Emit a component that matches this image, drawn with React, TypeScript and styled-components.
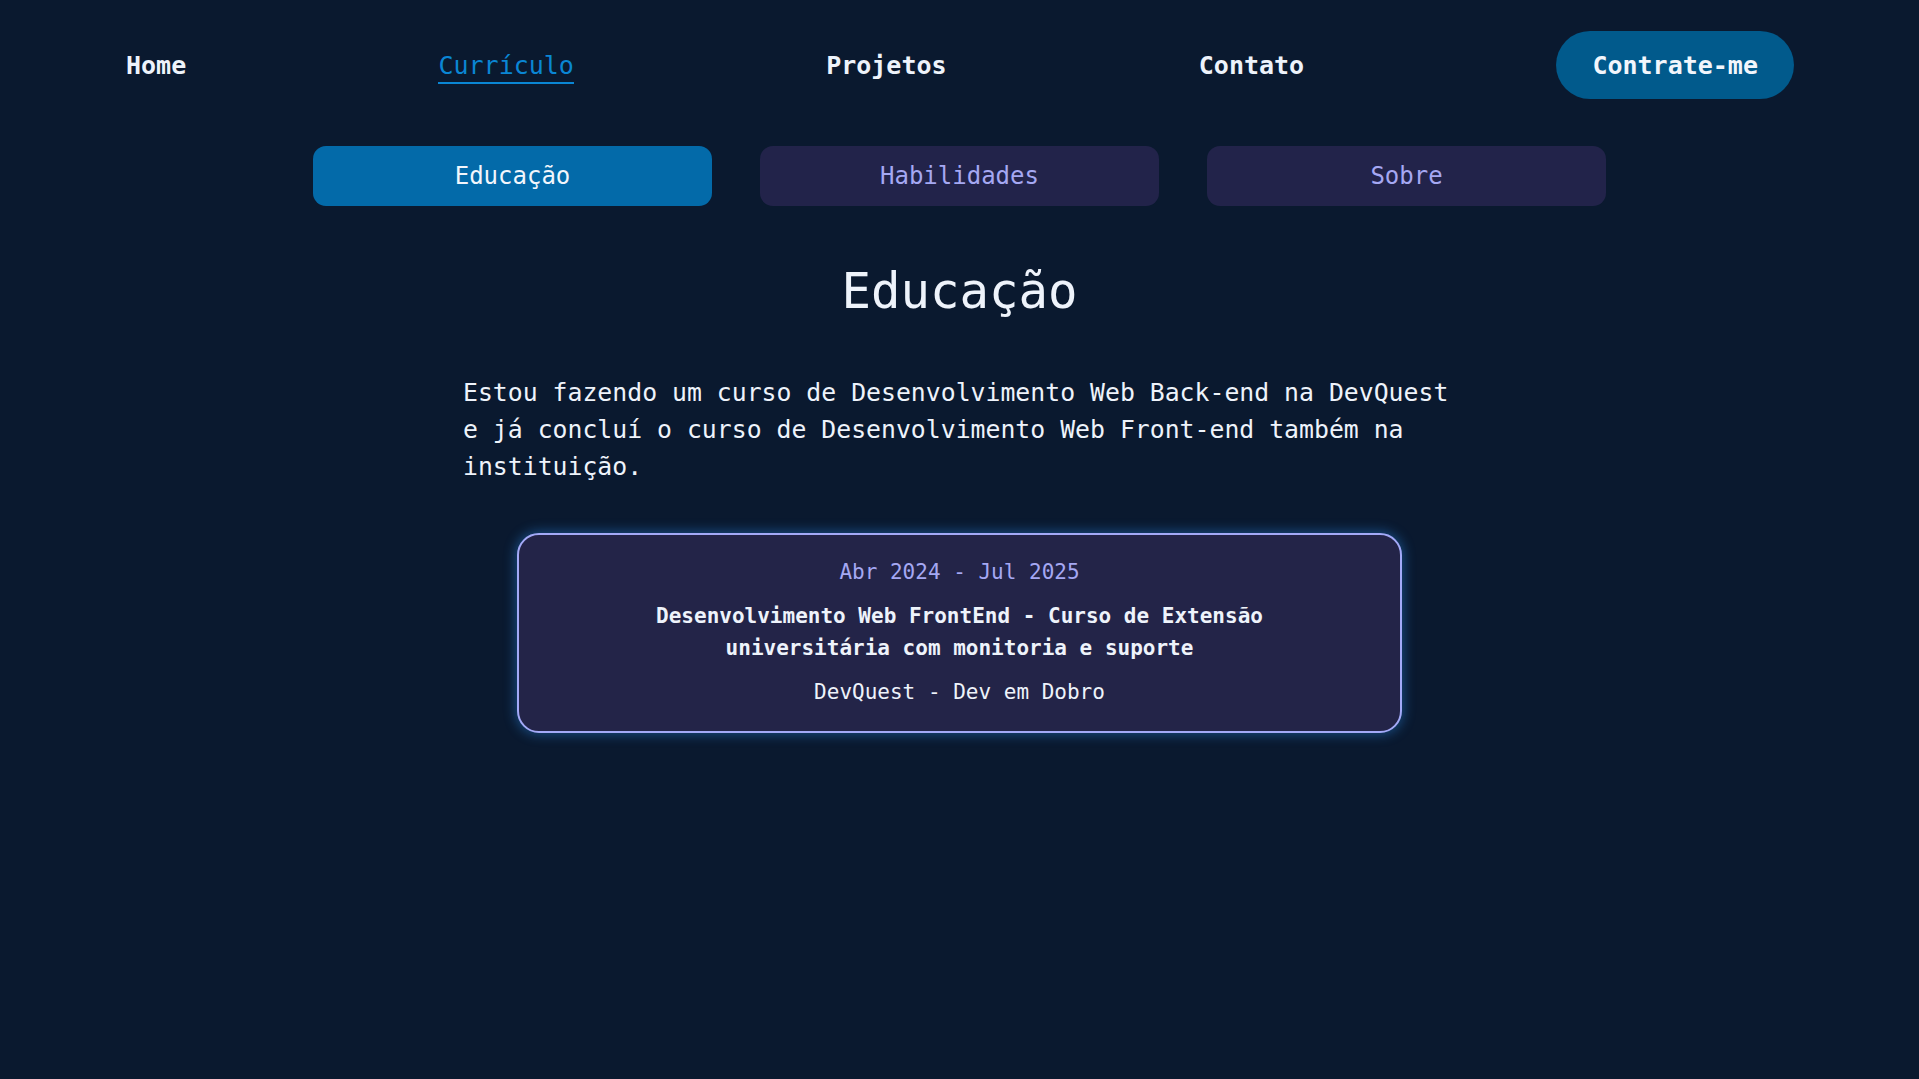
import React, { useState } from "react";
import styled, { createGlobalStyle } from "styled-components";

const GlobalStyle = createGlobalStyle`
  html, body {
    margin: 0;
    padding: 0;
    background: #0a192f;
  }
  body {
    font-family: "DejaVu Sans Mono", "Liberation Mono", monospace;
    color: #e6edf7;
    min-height: 100vh;
  }
  * { box-sizing: border-box; }
`;

const Page = styled.div`
  min-height: 1079px;
  background: #0a192f;
  display: flex;
  flex-direction: column;
  align-items: center;
`;

const Nav = styled.nav`
  width: 100%;
  display: flex;
  justify-content: space-between;
  align-items: center;
  padding: 31px 125px 0 126px;
`;

const NavLink = styled.a<{ $active?: boolean }>`
  display: inline-block;
  font-size: 25px;
  line-height: 1.164;
  font-weight: ${(p) => (p.$active ? 400 : 700)};
  color: ${(p) => (p.$active ? "#0a86d4" : "#eef3fb")};
  text-decoration: none;
  padding-bottom: 2px;
  border-bottom: 2px solid ${(p) => (p.$active ? "#0a86d4" : "transparent")};
  margin-top: 5px;
  cursor: pointer;
`;

const HireButton = styled.button`
  height: 68px;
  padding: 0 36px;
  border: none;
  border-radius: 34px;
  background: #015a8c;
  color: #f2f6fc;
  font-family: inherit;
  font-size: 25px;
  font-weight: 700;
  display: flex;
  align-items: center;
  cursor: pointer;
`;

const Tabs = styled.div`
  display: flex;
  gap: 48px;
  margin-top: 47px;
`;

const Tab = styled.button<{ $active?: boolean }>`
  width: 399px;
  height: 60px;
  border: none;
  border-radius: 13px;
  background: ${(p) => (p.$active ? "#036aa9" : "#22234a")};
  color: ${(p) => (p.$active ? "#f2f6fc" : "#a5a8f3")};
  font-family: inherit;
  font-size: 24px;
  display: flex;
  align-items: center;
  justify-content: center;
  cursor: pointer;
`;

const Title = styled.h1`
  margin: 57px 0 0;
  font-size: 49px;
  line-height: 1.2;
  font-weight: 400;
  color: #eef3fb;
  text-align: center;
`;

const Intro = styled.p`
  width: 1005px;
  margin: 52px 0 0 12px;
  font-size: 24.8px;
  line-height: 37px;
  color: #eef3fb;
  text-align: left;
`;

const Card = styled.div`
  width: 885px;
  margin-top: 48px;
  padding: 22px 40px 22px;
  border: 2px solid #a3a9f7;
  border-radius: 22px;
  background: #232448;
  box-shadow: 0 0 12px 2px rgba(40, 130, 220, 0.45);
  display: flex;
  flex-direction: column;
  align-items: center;
  gap: 13px;
  text-align: center;
`;

const CardDate = styled.div`
  font-size: 21px;
  line-height: 1.5;
  color: #a5a8f3;
`;

const CardTitle = styled.h3`
  margin: 0;
  max-width: 640px;
  font-size: 21px;
  line-height: 1.5;
  font-weight: 700;
  color: #eef3fb;
`;

const CardOrg = styled.div`
  font-size: 21px;
  line-height: 1.5;
  color: #eef3fb;
`;

const tabs = ["Educação", "Habilidades", "Sobre"];

export default function App() {
  const [active, setActive] = useState(0);
  return (
    <>
      <GlobalStyle />
      <Page>
        <Nav>
          <NavLink>Home</NavLink>
          <NavLink $active>Currículo</NavLink>
          <NavLink>Projetos</NavLink>
          <NavLink>Contato</NavLink>
          <HireButton>Contrate-me</HireButton>
        </Nav>
        <Tabs>
          {tabs.map((t, i) => (
            <Tab key={t} $active={i === active} onClick={() => setActive(i)}>
              {t}
            </Tab>
          ))}
        </Tabs>
        <Title>Educação</Title>
        <Intro>
          Estou fazendo um curso de Desenvolvimento Web Back-end na DevQuest e já
          concluí o curso de Desenvolvimento Web Front-end também na instituição.
        </Intro>
        <Card>
          <CardDate>Abr 2024 - Jul 2025</CardDate>
          <CardTitle>
            Desenvolvimento Web FrontEnd - Curso de Extensão universitária com
            monitoria e suporte
          </CardTitle>
          <CardOrg>DevQuest - Dev em Dobro</CardOrg>
        </Card>
      </Page>
    </>
  );
}
